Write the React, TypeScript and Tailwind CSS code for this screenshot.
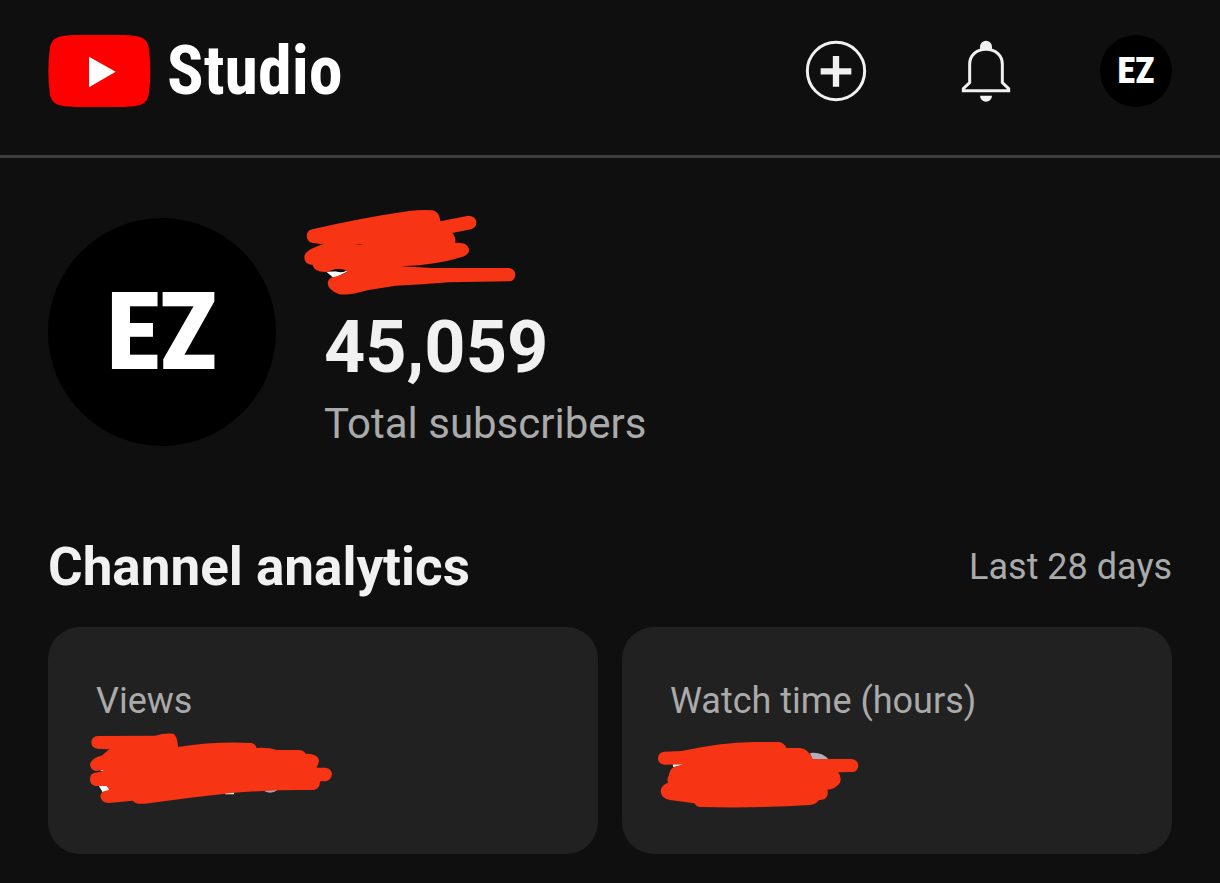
import type { ReactNode } from 'react'

type StatCardProps = {
  label: string
  children: ReactNode
}

function Logo() {
  return (
    <a href="#" className="flex items-center gap-4 text-white">
      <svg className="w-[103px] h-[72px]" viewBox="54 44 309 216" aria-hidden="true">
        <path
          fill="#ff0000"
          d="M104 46Q208 38 312 46Q349 48 356 79Q366 152 356 225Q349 256 312 258Q208 266 104 258Q67 256 60 225Q50 152 60 79Q67 48 104 46Z"
        />
        <path fill="#fff" d="M177 109L257 154L177 201Z" />
      </svg>
      <span className="font-['Roboto_Condensed','Liberation_Sans_Narrow',sans-serif] font-bold text-[68px] leading-[72px]">
        Studio
      </span>
    </a>
  )
}

function CreateIcon() {
  return (
    <svg className="size-[72px]" viewBox="60 45 216 216" fill="none" aria-hidden="true">
      <circle cx="168" cy="153" r="86" stroke="#f1f1f1" strokeWidth="9" />
      <path d="M168 108V200M122 154H214" stroke="#f1f1f1" strokeWidth="19" />
    </svg>
  )
}

function BellIcon() {
  return (
    <svg className="size-[72px]" viewBox="510 45 216 216" fill="none" aria-hidden="true">
      <path
        d="M550 212V206L569 188V133C569 106 590 88 618 88S667 106 667 133V188L686 206V212Z"
        stroke="#f1f1f1"
        strokeWidth="9"
      />
      <path d="M600 88V80A18 18 0 0 1 636 80V88Q618 82 600 88Z" fill="#f1f1f1" />
      <path d="M600 227H636A18 18 0 0 1 600 227Z" fill="#f1f1f1" />
    </svg>
  )
}

function NameScribble() {
  return (
    <svg className="-ml-5 w-[214px] h-[86px]" viewBox="45 45 642 258" aria-hidden="true">
      <path fill="#fff" d="M112 230L135 250L178 228Z" />
      <path
        fill="#f73414"
        d="M70 103Q220 68 360 48Q400 44 432 46Q452 52 454 79L538 62Q560 62 562 82Q562 98 546 103L490 114Q501 126 499 144Q533 140 540 162Q542 182 510 188Q450 208 335 214L430 219H660Q678 222 679 239Q678 257 662 259L480 262Q400 269 320 272L235 286Q185 302 150 298Q118 284 116 266Q117 248 135 246Q160 240 176 230Q165 222 140 222L112 231Q75 232 71 210Q45 208 46 185Q48 164 103 148L72 144Q53 140 53 122Q54 106 70 103Z"
      />
      <path fill="#0f0f0f" d="M136 226Q155 219 172 227Q153 237 136 226ZM200 150Q211 145 222 150Q211 149 200 150Z" />
    </svg>
  )
}

function ViewsScribble() {
  return (
    <svg className="-ml-1.5 w-[243px] h-[80px]" viewBox="45 33 729 240" aria-hidden="true">
      <path fill="#fff" d="M72 198H102L106 212L84 218ZM450 212H477V223H450ZM75 151L86 148V155Z" />
      <path fill="#a8a5aa" d="M560 208Q584 228 612 208Z" />
      <path
        fill="#f73414"
        d="M68 48L240 47Q270 38 296 41Q308 52 309 81Q420 64 530 69Q542 72 545 84Q580 82 606 90H670Q687 91 692 101Q729 100 732 122Q730 136 724 143H752Q770 146 771 163Q768 182 752 184H735Q735 207 716 210Q600 208 470 219Q340 233 210 251Q182 254 174 242L100 249Q80 248 76 230Q76 212 102 210Q100 203 94 198H62Q45 195 45 176Q46 160 60 158Q78 157 87 150L62 153Q45 148 45 132Q48 116 82 106L103 88L68 86Q49 84 49 66Q51 50 68 48Z"
      />
    </svg>
  )
}

function WatchTimeScribble() {
  return (
    <svg className="-ml-3 w-[201px] h-[80px]" viewBox="54 33 603 240" aria-hidden="true">
      <path fill="#fff" d="M98 133H132L112 139L100 141Z" />
      <path fill="#b3afb8" d="M510 99Q545 94 568 120H518Z" />
      <path
        fill="#f73414"
        d="M72 95L125 93Q240 68 340 66H418Q434 70 439 84H480Q506 87 518 117H636Q654 120 655 137Q653 154 638 156L594 157Q606 170 600 188Q588 206 562 209Q567 228 553 238L536 241Q528 254 510 255Q360 265 178 261Q168 258 162 250L90 240Q62 234 62 212Q64 196 84 188Q80 174 87 166Q88 148 102 141L132 133L72 134Q54 131 54 114Q55 98 72 95Z"
      />
    </svg>
  )
}

function StatCard({ label, children }: StatCardProps) {
  return (
    <article className="rounded-[32px] bg-[#212121] px-12 pt-[52px] pb-[43px]">
      <h3 className="text-4xl leading-[44px] text-[#aaaaaa]">{label}</h3>
      <div className="mt-2">{children}</div>
    </article>
  )
}

export default function App() {
  return (
    <div className="min-h-screen bg-[#0f0f0f] font-[Roboto,sans-serif] text-[#f1f1f1]">
      <header className="flex items-center justify-between border-b-3 border-[#3f3f3f] px-12 pt-[35px] pb-12">
        <Logo />
        <div className="flex items-center gap-[78px]">
          <button type="button" aria-label="Create">
            <CreateIcon />
          </button>
          <button type="button" aria-label="Notifications">
            <BellIcon />
          </button>
          <button
            type="button"
            className="flex size-[72px] items-center justify-center rounded-full bg-black font-['Roboto_Condensed','Liberation_Sans_Narrow',sans-serif] text-4xl font-black text-white"
          >
            EZ
          </button>
        </div>
      </header>

      <main className="px-12 pt-[52px] pb-7">
        {/* Channel summary */}
        <section className="flex items-start gap-12">
          <div className="mt-2 flex size-[228px] shrink-0 items-center justify-center rounded-full bg-black font-['Roboto_Condensed','Liberation_Sans_Narrow',sans-serif] text-[108px] font-black text-white">
            EZ
          </div>
          <div>
            <NameScribble />
            <p className="mt-4 text-7xl leading-[72px] font-bold">45,059</p>
            <p className="mt-4 text-[42px] leading-[48px] text-[#aaaaaa]">Total subscribers</p>
          </div>
        </section>

        {/* Analytics */}
        <section className="mt-[89px]">
          <div className="flex items-center justify-between">
            <h2 className="text-[53px] leading-[60px] font-bold">Channel analytics</h2>
            <p className="text-4xl leading-[44px] text-[#aaaaaa]">Last 28 days</p>
          </div>
          <div className="mt-[30px] grid grid-cols-2 gap-6">
            <StatCard label="Views">
              <ViewsScribble />
            </StatCard>
            <StatCard label="Watch time (hours)">
              <WatchTimeScribble />
            </StatCard>
          </div>
        </section>
      </main>
    </div>
  )
}
